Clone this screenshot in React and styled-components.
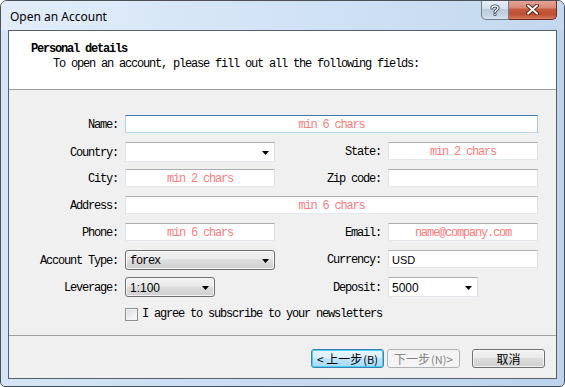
import React from 'react';
import styled, { createGlobalStyle, css } from 'styled-components';

const GlobalStyle = createGlobalStyle`
  html, body { margin: 0; padding: 0; background: #ffffff; }
  * { box-sizing: border-box; }
`;

const MONO = `"Liberation Mono", "DejaVu Sans Mono", monospace`;
const CJK = `"Noto Sans CJK SC", "Liberation Sans", sans-serif`;
const SANS = `"Liberation Sans", Arial, sans-serif`;

const monoText = css`
  font-family: ${MONO};
  font-size: 12px;
  letter-spacing: -1.2px;
`;

const Window = styled.div`
  width: 565px;
  height: 387px;
  border: 1px solid #4b5158;
  border-radius: 7px 7px 5px 5px;
  background: linear-gradient(to right, #d5e5f7 0%, #c6dbf2 50%, #bcd4ee 100%);
  display: flex;
  flex-direction: column;
  padding: 0 7px 7px 7px;
  overflow: hidden;
`;

const TitleBar = styled.div`
  height: 29px;
  display: flex;
  align-items: flex-start;
  justify-content: space-between;
  margin: 0 -7px;
  padding: 0 7px;
  background: linear-gradient(to right, #e2edf9 0%, #d3e4f6 45%, #c3d8ef 100%);
`;

const Title = styled.div`
  align-self: center;
  padding-left: 2px;
  padding-top: 1px;
  font-family: "Noto Sans", "Open Sans", sans-serif;
  font-size: 12px;
  color: #000;
`;

const CaptionButtons = styled.div`
  display: flex;
  margin-top: -1px;
`;

const CaptionButton = styled.div`
  height: 20px;
  width: ${(p) => p.$w}px;
  display: flex;
  align-items: center;
  justify-content: center;
  border: 1px solid ${(p) => (p.$close ? '#6c2e22' : '#6f7f90')};
  border-top: none;
  border-radius: ${(p) => (p.$close ? '0 0 5px 0' : '0 0 0 5px')};
  ${(p) => (p.$close ? css`
    border-left: none;
    background: linear-gradient(to bottom, #e6a597 0%, #d98a77 40%, #c55a3f 50%, #c04e32 75%, #d77a5e 100%);
  ` : css`
    background: linear-gradient(to bottom, #e9f0f8 0%, #d5e0ec 45%, #bccbdc 50%, #c6d4e3 80%, #d9e4ef 100%);
  `)}
`;

const Client = styled.div`
  flex: 1;
  border: 1px solid #56606b;
  background: #f0f0f0;
  display: flex;
  flex-direction: column;
`;

const Header = styled.div`
  height: 59px;
  background: #ffffff;
  border-bottom: 1px solid #a0a0a0;
  padding: 11px 0 0 22px;
  ${monoText};
  line-height: 15px;
  color: #000;
`;

const HeaderTitle = styled.div`
  font-weight: bold;
`;

const HeaderText = styled.div`
  padding-left: 22px;
`;

const Body = styled.div`
  flex: 1;
  display: flex;
  flex-direction: column;
`;

const Form = styled.div`
  flex: 1;
  padding-top: 25px;
  display: grid;
  grid-template-columns: 109px 150px 99px 150px;
  grid-auto-rows: 20px;
  column-gap: 7px;
  row-gap: 7px;
  align-content: start;
`;

const Label = styled.div`
  align-self: ${(p) => (p.$short ? 'start' : 'center')};
  line-height: ${(p) => (p.$short ? '19px' : '20px')};
  padding-top: 1px;
  text-align: right;
  white-space: nowrap;
  ${monoText};
  color: #000;
`;

const TextBox = styled.input`
  height: 18px;
  width: 100%;
  align-self: start;
  grid-column: ${(p) => p.$span || 'auto'};
  margin: 0;
  padding: 1px 3px 0;
  background: #ffffff;
  border: 1px solid;
  border-color: ${(p) => (p.$focus ? '#3d7bad #a4c9e3 #b7d9ed #b5cfe7' : '#abadb3 #dbdfe6 #e3e9ef #e2e3ea')};
  outline: none;
  text-align: ${(p) => (p.$left ? 'left' : 'center')};
  ${(p) => (p.$sans ? css`
    font-family: ${SANS};
    font-size: 11px;
    letter-spacing: 0;
  ` : monoText)};
  color: #000;
  &::placeholder {
    color: #ff7b7b;
    opacity: 1;
  }
`;

const Combo = styled.div`
  height: 20px;
  width: ${(p) => (p.$w ? `${p.$w}px` : '100%')};
  display: flex;
  align-items: center;
  justify-content: space-between;
  padding: 1px 5px 0 3px;
  color: #000;
  ${(p) => (p.$sans ? css`
    font-family: ${SANS};
    font-size: 12px;
  ` : monoText)};
  ${(p) => (p.$button ? css`
    border: 1px solid #707070;
    border-radius: 3px;
    box-shadow: inset 0 0 0 1px rgba(255, 255, 255, 0.75);
    background: linear-gradient(to bottom, #f2f2f2 0%, #ebebeb 45%, #dddddd 50%, #cfcfcf 100%);
    padding-left: 4px;
  ` : css`
    border: 1px solid;
    border-color: #abadb3 #dbdfe6 #e3e9ef #e2e3ea;
    background: #ffffff;
  `)}
`;

const Arrow = () => (
  <svg width="7" height="4" viewBox="0 0 7 4">
    <polygon points="0,0 7,0 3.5,4" fill="#000" />
  </svg>
);

const CheckRow = styled.label`
  grid-column: 2 / 5;
  display: flex;
  align-items: center;
  gap: 4px;
  ${monoText};
  color: #000;
  white-space: nowrap;
`;

const CheckBox = styled.span`
  width: 13px;
  height: 13px;
  border: 1px solid #8e8f8f;
  background: linear-gradient(135deg, #d9d9d9 0%, #f3f3f3 70%, #fbfbfb 100%);
  box-shadow: inset 0 0 0 1px #f4f4f4;
`;

const Footer = styled.div`
  height: 43px;
  border-top: 1px solid #a0a0a0;
  display: flex;
  justify-content: flex-end;
  align-items: flex-start;
  padding: 13px 11px 0 0;
  gap: 3px;
`;

const Button = styled.div`
  width: 73px;
  height: 19px;
  margin-left: ${(p) => (p.$sep ? '9px' : '0')};
  display: flex;
  align-items: center;
  justify-content: center;
  border-radius: 3px;
  font-family: ${CJK};
  font-size: 12px;
  white-space: nowrap;
  ${(p) => (p.$focus ? css`
    border: 1px solid #3c7fb1;
    color: #000;
    background: linear-gradient(to bottom, #eaf6fd 0%, #d9f0fc 45%, #bee6fd 50%, #a7d9f5 100%);
    box-shadow: inset 0 0 0 1px #48d2fb;
  ` : p.$disabled ? css`
    border: 1px solid #adb2b5;
    color: #838383;
    background: #f4f4f4;
  ` : css`
    border: 1px solid #707070;
    color: #000;
    background: linear-gradient(to bottom, #f2f2f2 0%, #ebebeb 45%, #dddddd 50%, #cfcfcf 100%);
    box-shadow: inset 0 0 0 1px rgba(255, 255, 255, 0.7);
  `)}
`;

const Mnemonic = styled.span`
  font-size: 11px;
  margin-left: 1px;
`;

export default function App() {
  return (
    <>
      <GlobalStyle />
      <Window>
        <TitleBar>
          <Title>Open an Account</Title>
          <CaptionButtons>
            <CaptionButton $w={28}>
              <svg width="10" height="12" viewBox="0 0 10 12">
                <path d="M2 4 C2 1.5 8 1.2 8 4 C8 6 5 6 5 8" fill="none" stroke="#3b4a5c" strokeWidth="3.2" strokeLinecap="round" />
                <circle cx="5" cy="10.6" r="1.6" fill="#3b4a5c" />
                <path d="M2 4 C2 1.5 8 1.2 8 4 C8 6 5 6 5 8" fill="none" stroke="#ffffff" strokeWidth="1.4" strokeLinecap="round" />
                <circle cx="5" cy="10.6" r="0.8" fill="#ffffff" />
              </svg>
            </CaptionButton>
            <CaptionButton $w={48} $close>
              <svg width="13" height="11" viewBox="0 0 13 11">
                <path d="M2 1.5 L11 9.5 M11 1.5 L2 9.5" stroke="#5a2418" strokeWidth="4" strokeLinecap="round" />
                <path d="M2 1.5 L11 9.5 M11 1.5 L2 9.5" stroke="#ffffff" strokeWidth="2" strokeLinecap="round" />
              </svg>
            </CaptionButton>
          </CaptionButtons>
        </TitleBar>
        <Client>
          <Header>
            <HeaderTitle>Personal details</HeaderTitle>
            <HeaderText>To open an account, please fill out all the following fields:</HeaderText>
          </Header>
          <Body>
            <Form>
              <Label $short>Name:</Label>
              <TextBox $span="2 / 5" $focus placeholder="min 6 chars" readOnly />

              <Label>Country:</Label>
              <Combo><span /><Arrow /></Combo>
              <Label $short>State:</Label>
              <TextBox placeholder="min 2 chars" readOnly />

              <Label $short>City:</Label>
              <TextBox placeholder="min 2 chars" readOnly />
              <Label $short>Zip code:</Label>
              <TextBox readOnly />

              <Label $short>Address:</Label>
              <TextBox $span="2 / 5" placeholder="min 6 chars" readOnly />

              <Label $short>Phone:</Label>
              <TextBox placeholder="min 6 chars" readOnly />
              <Label $short>Email:</Label>
              <TextBox placeholder="name@company.com" readOnly />

              <Label>Account Type:</Label>
              <Combo $button><span>forex</span><Arrow /></Combo>
              <Label $short>Currency:</Label>
              <TextBox $left $sans defaultValue="USD" readOnly />

              <Label>Leverage:</Label>
              <Combo $button $sans $w={90}><span>1:100</span><Arrow /></Combo>
              <Label>Deposit:</Label>
              <Combo $sans $w={90}><span>5000</span><Arrow /></Combo>

              <CheckRow>
                <CheckBox />
                I agree to subscribe to your newsletters
              </CheckRow>
            </Form>
            <Footer>
              <Button $focus>&lt; 上一步<Mnemonic>(B)</Mnemonic></Button>
              <Button $disabled>下一步<Mnemonic>(N)</Mnemonic> &gt;</Button>
              <Button $sep>取消</Button>
            </Footer>
          </Body>
        </Client>
      </Window>
    </>
  );
}
